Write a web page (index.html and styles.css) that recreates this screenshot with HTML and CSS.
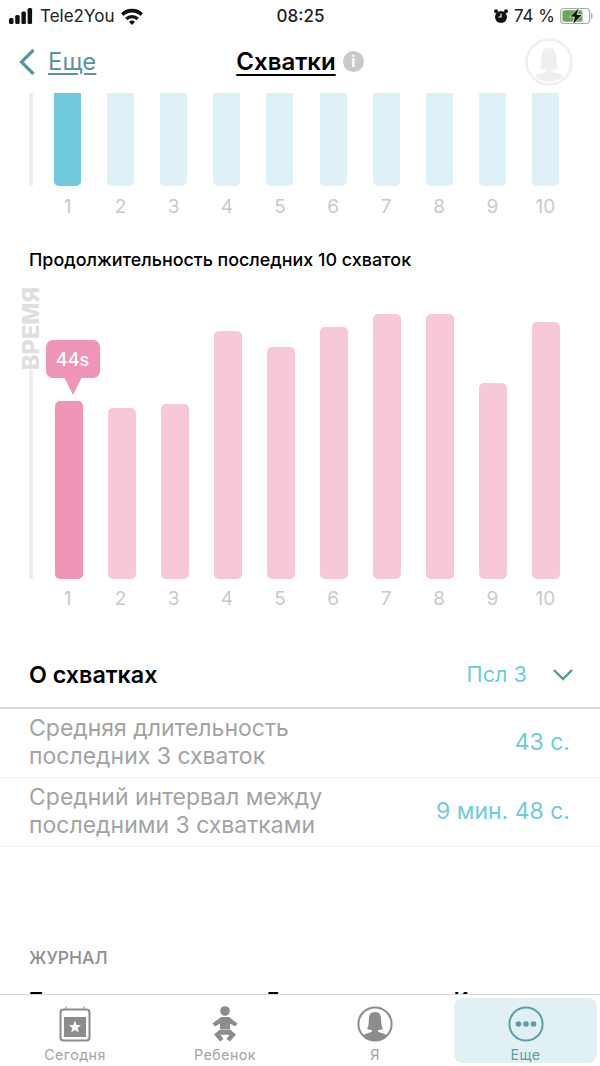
FILE: index.html
```html
<!DOCTYPE html>
<html lang="ru">
<head>
    <meta charset="UTF-8" />
    <title>Схватки</title>
    <meta name="viewport" content="width=device-width, initial-scale=1.0" />
    <link rel="stylesheet" href="styles.css">
</head>
<body>

    <div class="status-bar">
        <div class="status-left">
            <svg class="signal" width="24" height="16" viewBox="0 0 24 16">
                <rect x="0" y="10" width="4.5" height="6" rx="1.5" />
                <rect x="6.2" y="7" width="4.5" height="9" rx="1.5" />
                <rect x="12.4" y="3.5" width="4.5" height="12.5" rx="1.5" />
                <rect x="18.6" y="0" width="4.5" height="16" rx="1.5" />
            </svg>
            <span>Tele2You</span>
            <svg class="wifi" width="22" height="17" viewBox="0 0 21 16">
                <path d="M0 5 A15 15 0 0 1 21 5 L18.7 7.6 A11.6 11.6 0 0 0 2.3 7.6 Z" />
                <path d="M3.9 9.2 A9.4 9.4 0 0 1 17.1 9.2 L14.9 11.6 A6.2 6.2 0 0 0 6.1 11.6 Z" />
                <path d="M7.6 13 A4 4 0 0 1 13.4 13 L10.5 16 Z" />
            </svg>
        </div>
        <div class="status-time">08:25</div>
        <div class="status-right">
            <svg width="16" height="16" viewBox="0 0 16 16">
                <circle cx="8" cy="9" r="6" fill="#111" />
                <circle cx="3" cy="3.2" r="2" fill="#111" />
                <circle cx="13" cy="3.2" r="2" fill="#111" />
                <path d="M8 5.5 V9 H5.5" fill="none" stroke="#fff" stroke-width="1.2" />
            </svg>
            <span>74 %</span>
            <svg width="34" height="18" viewBox="0 0 34 18">
                <rect x="0.7" y="1.5" width="29" height="15" rx="3.5" fill="#fff" stroke="#a9a9a9" stroke-width="1.2" />
                <rect x="2.5" y="3.2" width="20" height="11.6" rx="2" fill="#6aa75a" />
                <path d="M31 6 C33 6.5 33 11.5 31 12 Z" fill="#a9a9a9" />
                <path d="M19.5 0 L9.5 10 H14.5 L12.5 18 L22.5 7.5 H17 Z" fill="#111" stroke="#fff" stroke-width="0.7" />
            </svg>
        </div>
    </div>

    <header class="nav">
        <div class="nav-back">
            <svg width="18" height="28" viewBox="0 0 18 28">
                <path d="M15.5 2 L3.5 14 L15.5 26" fill="none" stroke="#5b969d" stroke-width="3.2" />
            </svg>
            <span class="nav-back-text">Еще</span>
        </div>
        <div class="nav-title">
            <span class="nav-title-text">Схватки</span>
            <span class="info-icon">i</span>
        </div>
        <svg class="nav-avatar" width="48" height="48" viewBox="0 0 48 48">
            <circle cx="24" cy="24" r="22.5" fill="#fff" stroke="#efefef" stroke-width="2.5" />
            <path d="M24 10 C17.5 10 16.5 15 16.5 20 C16.5 26 15.5 29 14.5 30.5 C17 31.5 19 31.8 20.5 31.8 L20.5 33.5 C18 35.5 12.5 35.5 9.5 38 A21 21 0 0 0 38.5 38 C35.5 35.5 30 35.5 27.5 33.5 L27.5 31.8 C29 31.8 31 31.5 33.5 30.5 C32.5 29 31.5 26 31.5 20 C31.5 15 30.5 10 24 10 Z" fill="#efefef" />
        </svg>
    </header>

    <main class="content">
        <section class="chart chart-top">
            <div class="axis"></div>
            <div class="bars">
                <div class="bar blue active" style="height: 93px"></div>
                <div class="bar blue" style="height: 93px"></div>
                <div class="bar blue" style="height: 93px"></div>
                <div class="bar blue" style="height: 93px"></div>
                <div class="bar blue" style="height: 93px"></div>
                <div class="bar blue" style="height: 93px"></div>
                <div class="bar blue" style="height: 93px"></div>
                <div class="bar blue" style="height: 93px"></div>
                <div class="bar blue" style="height: 93px"></div>
                <div class="bar blue" style="height: 93px"></div>
            </div>
        </section>
        <div class="chart-labels">
            <span>1</span><span>2</span><span>3</span><span>4</span><span>5</span>
            <span>6</span><span>7</span><span>8</span><span>9</span><span>10</span>
        </div>

        <h2 class="chart-title">Продолжительность последних 10 схваток</h2>

        <section class="chart chart-main">
            <div class="axis"></div>
            <div class="axis-label">ВРЕМЯ</div>
            <div class="bars">
                <div class="bar pink active" style="height: 178px">
                    <div class="bubble">44s</div>
                </div>
                <div class="bar pink" style="height: 171px"></div>
                <div class="bar pink" style="height: 175px"></div>
                <div class="bar pink" style="height: 248px"></div>
                <div class="bar pink" style="height: 232px"></div>
                <div class="bar pink" style="height: 252px"></div>
                <div class="bar pink" style="height: 265px"></div>
                <div class="bar pink" style="height: 265px"></div>
                <div class="bar pink" style="height: 196px"></div>
                <div class="bar pink" style="height: 257px"></div>
            </div>
        </section>
        <div class="chart-labels">
            <span>1</span><span>2</span><span>3</span><span>4</span><span>5</span>
            <span>6</span><span>7</span><span>8</span><span>9</span><span>10</span>
        </div>

        <div class="about-head">
            <h3>О схватках</h3>
            <div class="about-filter">
                <span>Псл 3</span>
                <svg width="22" height="13" viewBox="0 0 22 13">
                    <path d="M2 2 L11 11 L20 2" fill="none" stroke="#5b969d" stroke-width="2.4" />
                </svg>
            </div>
        </div>

        <div class="stat-row">
            <div class="stat-name">Средняя длительность<br>последних 3 схваток</div>
            <div class="stat-value">43 с.</div>
        </div>
        <div class="stat-row">
            <div class="stat-name">Средний интервал между<br>последними 3 схватками</div>
            <div class="stat-value">9 мин. 48 с.</div>
        </div>

        <div class="journal-title">ЖУРНАЛ</div>
        <div class="journal-cols">
            <span>Продолж.</span>
            <span>Длительность</span>
            <span>Интервал</span>
        </div>
    </main>

    <nav class="tabbar">
        <div class="tab">
            <svg width="32" height="36" viewBox="0 0 32 36">
                <path d="M7 0 V4 M25 0 V4" stroke="#9a9a9a" stroke-width="1" />
                <rect x="1.5" y="3.5" width="29" height="31" rx="3" fill="#fff" stroke="#8c8c8c" stroke-width="2" />
                <rect x="5" y="11" width="22" height="20" fill="#8c8c8c" />
                <path d="M16 14.5 L17.6 19 L22 19.2 L18.6 22 L19.8 26.4 L16 23.9 L12.2 26.4 L13.4 22 L10 19.2 L14.4 19 Z" fill="#fff" />
            </svg>
            <span>Сегодня</span>
        </div>
        <div class="tab">
            <svg width="28" height="36" viewBox="0 0 28 36">
                <circle cx="14" cy="5" r="4.8" fill="#8c8c8c" />
                <path d="M10 11 H18 L26.5 17.5 L24 20.5 L19 17.5 V23 H9 V17.5 L4 20.5 L1.5 17.5 Z" fill="#8c8c8c" />
                <path d="M9 23.5 H19 L25 28.5 L19 35.5 L15.5 33 L18.5 28.8 H9.5 L12.5 33 L9 35.5 L3 28.5 Z" fill="#8c8c8c" />
            </svg>
            <span>Ребенок</span>
        </div>
        <div class="tab">
            <svg width="36" height="36" viewBox="0 0 36 36">
                <circle cx="18" cy="18" r="16.6" fill="#fff" stroke="#8c8c8c" stroke-width="2" />
                <path d="M18 6 C12.5 6 11.8 10.5 11.8 14.5 C11.8 19 11 21.5 10 23 C12 23.8 13.5 24 15 24 L15 25.5 C13 27 8.5 27 6.5 29.5 A16 16 0 0 0 29.5 29.5 C27.5 27 23 27 21 25.5 L21 24 C22.5 24 24 23.8 26 23 C25 21.5 24.2 19 24.2 14.5 C24.2 10.5 23.5 6 18 6 Z" fill="#8c8c8c" />
            </svg>
            <span>Я</span>
        </div>
        <div class="tab tab-active">
            <svg width="36" height="36" viewBox="0 0 36 36">
                <circle cx="18" cy="18" r="16.6" fill="none" stroke="#5b9fa8" stroke-width="2" />
                <circle cx="10.5" cy="18" r="2.8" fill="#5b9fa8" />
                <circle cx="18" cy="18" r="2.8" fill="#5b9fa8" />
                <circle cx="25.5" cy="18" r="2.8" fill="#5b9fa8" />
            </svg>
            <span>Еще</span>
        </div>
    </nav>

</body>
</html>
```

FILE: styles.css
```css
:root {
    --teal: #5b969d;
    --blue: #6fcade;
    --blue-light: #ddf1f6;
    --pink: #f094b8;
    --pink-light: #f6c8da;
    --grey-text: #a3a3a3;
    --tab-grey: #8c8c8c;
}

* {
    box-sizing: border-box;
    margin: 0;
    padding: 0;
}

body {
    font-family: Inter, "Noto Sans", sans-serif;
    background: #fff;
    color: #000;
    width: 600px;
    height: 1066px;
    display: flex;
    flex-direction: column;
    overflow: hidden;
}

/* Status bar */
.status-bar {
    height: 32px;
    padding: 0 6px 0 9px;
    display: flex;
    align-items: center;
    justify-content: space-between;
    font-size: 17px;
    color: #222;
    flex-shrink: 0;
}

.status-left {
    display: flex;
    align-items: center;
    gap: 7px;
    width: 198px;
}

.status-left .signal,
.status-left .wifi {
    fill: #111;
}

.status-time {
    font-size: 17px;
    font-weight: 500;
}

.status-right {
    display: flex;
    align-items: center;
    justify-content: flex-end;
    gap: 5px;
    width: 200px;
}

/* Nav */
.nav {
    height: 61px;
    padding: 0 27px 2px;
    display: grid;
    grid-template-columns: 1fr auto 1fr;
    align-items: center;
    flex-shrink: 0;
}

.nav-back {
    display: flex;
    align-items: center;
    gap: 12px;
    margin-left: -9px;
}

.nav-back-text {
    font-size: 24px;
    color: var(--teal);
    text-decoration: underline;
    text-underline-offset: 3px;
    text-decoration-thickness: 1.5px;
}

.nav-title {
    display: flex;
    align-items: center;
    gap: 7px;
}

.nav-title-text {
    font-size: 24px;
    font-weight: 600;
    text-decoration: underline;
    text-underline-offset: 4px;
    text-decoration-thickness: 2px;
}

.info-icon {
    width: 21px;
    height: 21px;
    border-radius: 50%;
    background: #c9c9c9;
    color: #fff;
    font-size: 15px;
    font-weight: 700;
    display: flex;
    align-items: center;
    justify-content: center;
}

.nav-avatar {
    display: block;
    justify-self: end;
}

/* Charts */
.content {
    flex: 1;
    overflow: hidden;
    min-height: 0;
}

.chart {
    position: relative;
    margin-left: 29px;
    width: 543px;
}

.chart-top {
    height: 93px;
    padding-left: 12px;
}

.chart-main {
    height: 265px;
    margin-top: 43px;
    padding-left: 13px;
}

.axis {
    position: absolute;
    left: 0;
    bottom: 0;
    width: 4px;
    height: 100%;
    background: #eeeeee;
}

.chart-main .axis {
    height: 209px;
}

.axis-label {
    position: absolute;
    left: -10px;
    top: -28px;
    height: 84px;
    writing-mode: vertical-rl;
    transform: rotate(180deg);
    text-align: left;
    font-size: 23.5px;
    line-height: 23px;
    font-weight: 800;
    color: #dfdfe1;
}

.bars {
    display: grid;
    grid-template-columns: repeat(10, 1fr);
    align-items: end;
    justify-items: center;
    height: 100%;
}

.bar {
    width: 28px;
    border-radius: 5px;
    position: relative;
}

.bar.blue {
    width: 27px;
    border-radius: 0 0 5px 5px;
    background: var(--blue-light);
}

.bar.blue.active {
    background: var(--blue);
}

.bar.pink {
    background: var(--pink-light);
}

.bar.pink.active {
    background: var(--pink);
}

.bubble {
    position: absolute;
    left: -9px;
    top: -61px;
    width: 54px;
    height: 38px;
    border-radius: 7px;
    background: var(--pink);
    color: #fff;
    font-size: 18px;
    font-weight: 500;
    display: flex;
    align-items: center;
    justify-content: center;
}

.bubble::after {
    content: "";
    position: absolute;
    left: 18px;
    top: 37px;
    border-left: 9px solid transparent;
    border-right: 9px solid transparent;
    border-top: 18px solid var(--pink);
}

.chart-labels {
    display: grid;
    grid-template-columns: repeat(10, 1fr);
    justify-items: center;
    margin-left: 41px;
    width: 531px;
    margin-top: 9px;
    font-size: 19px;
    line-height: 24px;
    color: #c9c9c9;
}

.chart-main + .chart-labels {
    margin-top: 8px;
}

.chart-title {
    margin: 30px 0 0 29px;
    font-size: 17.9px;
    line-height: 22px;
    font-weight: 500;
}

/* About */
.about-head {
    display: flex;
    align-items: center;
    justify-content: space-between;
    height: 68px;
    margin-top: 30px;
    padding: 0 26px 0 29px;
    border-bottom: 2px solid #d8d8d8;
}

.about-head h3 {
    font-size: 23.3px;
    font-weight: 600;
}

.about-filter {
    display: flex;
    align-items: center;
    gap: 25px;
    font-size: 21.7px;
    color: var(--blue);
}

.stat-row {
    height: 69px;
    padding: 0 30px 3px 29px;
    display: flex;
    align-items: center;
    justify-content: space-between;
    border-bottom: 1px solid #f0f0f0;
}

.stat-row + .stat-row {
    padding-bottom: 2px;
}

.stat-name {
    font-size: 23px;
    line-height: 28px;
    color: var(--grey-text);
}

.stat-value {
    font-size: 23px;
    color: var(--blue);
}

.journal-title {
    margin: 101px 0 0 29px;
    font-size: 17.5px;
    line-height: 20px;
    font-weight: 500;
    color: #8f8f8f;
}

.journal-cols {
    display: flex;
    margin: 20px 0 0 29px;
    font-size: 19px;
    font-weight: 700;
}

.journal-cols span:nth-child(1) {
    width: 235px;
}

.journal-cols span:nth-child(2) {
    width: 190px;
}

/* Tab bar */
.tabbar {
    height: 72px;
    flex-shrink: 0;
    background: #fff;
    border-top: 1px solid #d9d9d9;
    padding: 3px 3px 3px 0;
    display: grid;
    grid-template-columns: 150px 150px 150px 1fr;
}

.tab {
    display: flex;
    flex-direction: column;
    align-items: center;
    padding-top: 8px;
    gap: 4px;
    font-size: 14.3px;
    letter-spacing: 0.4px;
    color: #a3a3a3;
    border-radius: 9px;
}

.tab svg {
    display: block;
    flex-shrink: 0;
}

.tab-active {
    margin-left: 4px;
    background: #e0f0f3;
    color: #5b9fa8;
}
```
